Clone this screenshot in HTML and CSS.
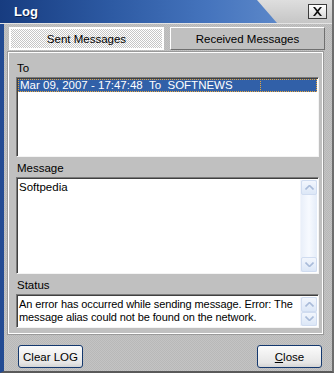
FILE: index.html
```html
<!DOCTYPE html>
<html lang="en">
<head>
	<meta charset="UTF-8">
	<title>Log</title>
	<link rel="stylesheet" href="styles.css">
</head>
<body>
<!-- log window: title bar, two tabs, group with three boxes, two buttons -->
<div class="window">
   <div class="titlebar">
      <div class="titleblue"><span class="title">Log</span></div>
      <div class="close">
         <svg width="11" height="9" viewBox="0 0 11 9"><path d="M1 0h2l2.5 3 2.5-3h2l-3.5 4.5 3.5 4.5h-2l-2.5-3-2.5 3h-2l3.5-4.5z" fill="#111"/></svg>
      </div>
   </div>
   <div class="content">
      <div class="tabs">
         <div class="tab active">Sent Messages</div>
         <div class="tab">Received Messages</div>
      </div>
      <div class="panel">
         <div class="label">To</div>
         <div class="list">
            <div class="row">Mar 09, 2007 - 17:47:48&nbsp; To&nbsp; SOFTNEWS<span class="col"></span></div>
         </div>
         <div class="label">Message</div>
         <div class="memo big">
            <div class="text">Softpedia</div>
            <div class="scroll">
               <div class="arrow up"><svg width="9" height="5" viewBox="0 0 9 5"><path d="M0.5 4.5l4-4 4 4" fill="none" stroke="#a9bbd9" stroke-width="1.6"/></svg></div>
               <div class="arrow down"><svg width="9" height="5" viewBox="0 0 9 5"><path d="M0.5 0.5l4 4 4-4" fill="none" stroke="#a9bbd9" stroke-width="1.6"/></svg></div>
            </div>
         </div>
         <div class="label">Status</div>
         <div class="memo small">
            <div class="text status">An error has occurred while sending message. Error: The message alias could not be found on the network.</div>
            <div class="scroll">
               <div class="arrow up"><svg width="9" height="5" viewBox="0 0 9 5"><path d="M0.5 4.5l4-4 4 4" fill="none" stroke="#a9bbd9" stroke-width="1.6"/></svg></div>
               <div class="arrow down"><svg width="9" height="5" viewBox="0 0 9 5"><path d="M0.5 0.5l4 4 4-4" fill="none" stroke="#a9bbd9" stroke-width="1.6"/></svg></div>
            </div>
         </div>
      </div>
      <div class="buttons">
         <div class="btn">Clear LOG</div>
         <div class="btn"><u>C</u>lose</div>
      </div>
   </div>
</div>
</body>
</html>
```

FILE: styles.css
```css
html,body{
	margin: 0;
	background: #c0c0c0;
}
.window{
	width: 334px;
	height: 373px;
	box-sizing: border-box;
	border-left: 4px solid #234b93;
	border-right: 2px solid #6e6e6e;
	border-bottom: 2px solid #5a5a5a;
	background: repeating-conic-gradient(#c4c4c4 0 25%, #b8b8b8 0 50%) 0 0/2px 2px;
	font-family: "Liberation Sans", Arial, sans-serif;
	font-size: 11px;
	color: #000;
	display: flex;
	flex-direction: column;
}
.titlebar{
	height: 23px;
	margin-left: -4px;
	background: linear-gradient(#dedede, #c6c6c6);
	border-bottom: 1px solid #e4e4e4;
	display: flex;
	align-items: center;
	position: relative;
}
.titleblue{
	position: absolute;
	left: 0;
	top: 0;
	bottom: 0;
	width: 277px;
	clip-path: polygon(0 0, 257px 0, 277px 100%, 0 100%);
	background: linear-gradient(to right, #173c80, #2d5aa3 40%, #4574bd 75%, #5b87c9);
}
.title{
	position: absolute;
	left: 14px;
	top: 4px;
	font-weight: bold;
	font-size: 13px;
	color: #fff;
	text-shadow: 1px 1px 0 #0c1f4a;
}
.close{
	margin-left: auto;
	margin-right: 5px;
	width: 19px;
	height: 15px;
	box-sizing: border-box;
	border: 1px solid #3c3c3c;
	background: linear-gradient(#ffffff, #d8d8d8);
	display: flex;
	align-items: center;
	justify-content: center;
}
.content{
	flex: 1;
	padding: 3px 0 0 5px;
	display: flex;
	flex-direction: column;
}
.tabs{
	display: flex;
	gap: 6px;
}
.tab{
	width: 155px;
	height: 23px;
	box-sizing: border-box;
	display: flex;
	align-items: center;
	justify-content: center;
	border: 1px solid;
	border-color: #fff #6f6f6f #6f6f6f #fff;
	background: #c0c0c0;
	font-size: 11.5px;
}
.tab.active{
	border: 2px solid #fff;
	background: repeating-conic-gradient(#ffffff 0 25%, #c6c6c6 0 50%) 0 0/2px 2px;
}
.panel{
	width: 315px;
	margin: 2px 0 0 -1px;
	box-sizing: border-box;
	border: 1px solid #fff;
	outline: 1px solid #9a9a9a;
	outline-offset: 0;
	background: #c0c0c0;
	padding: 8px 4px 5px 7px;
	display: flex;
	flex-direction: column;
}
.label{
	height: 14px;
	line-height: 14px;
	margin-bottom: 2px;
	padding-left: 1px;
	font-size: 11.5px;
}
.list,.memo{
	width: 303px;
	box-sizing: border-box;
	border: 1px solid;
	border-color: #7a7a7a #f4f4f4 #f4f4f4 #7a7a7a;
	box-shadow: inset 1px 1px 0 #404040;
	background: #fff;
}
.list{
	height: 80px;
	padding: 1px 1px;
	margin-bottom: 4px;
}
.row{
	height: 13px;
	line-height: 13px;
	background: #3160a8;
	color: #fff;
	padding-left: 2px;
	outline: 1px dotted #e8a63c;
	outline-offset: -1px;
	position: relative;
	font-size: 11.5px;
}
.col{
	position: absolute;
	left: 242px;
	top: 0;
	bottom: 0;
	border-left: 1px dotted #e8a63c;
}
.memo{
	display: flex;
	padding: 2px 1px 1px 2px;
}
.memo.big{
	height: 97px;
	margin-bottom: 4px;
}
.memo.small{
	height: 34px;
}
.text{
	flex: 1;
	line-height: 13px;
	padding-top: 1px;
	font-size: 11.5px;
}
.text.status{
	font-size: 11px;
	letter-spacing: -0.1px;
	padding-right: 2px;
}
.scroll{
	width: 16px;
	background: linear-gradient(to right, #e9eff9, #f7faff 50%, #e4ecf8);
	border-left: 1px solid #f2f5fb;
	display: flex;
	flex-direction: column;
	justify-content: space-between;
}
.arrow{
	height: 15px;
	box-sizing: border-box;
	border: 1px solid #d0dcf0;
	border-radius: 2px;
	background: linear-gradient(#f2f6fd, #dce7f7);
	display: flex;
	align-items: center;
	justify-content: center;
}
.buttons{
	display: flex;
	justify-content: space-between;
	padding: 11px 10px 0 9px;
}
.btn{
	width: 65px;
	height: 23px;
	box-sizing: border-box;
	border: 1px solid #14386e;
	border-radius: 3px;
	background: linear-gradient(#fbfbfb, #e6e6e6 80%, #d4d4d4);
	display: flex;
	align-items: center;
	justify-content: center;
	font-size: 11.5px;
}
.btn u{
	text-decoration: underline;
}
```
